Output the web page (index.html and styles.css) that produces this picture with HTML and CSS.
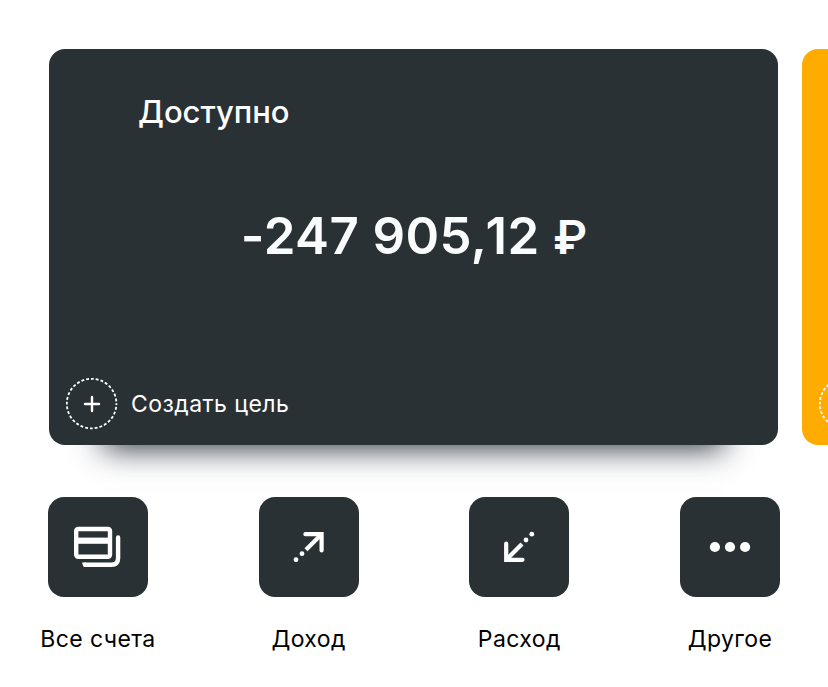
FILE: index.html
```
<!DOCTYPE html>
<html lang="ru">
<head>
    <meta charset="UTF-8">
    <meta name="viewport" content="width=device-width, initial-scale=1.0">
    <title>Счета</title>
    <link rel="stylesheet" href="styles.css">
</head>
<body>
    <div class="cards">
        <section class="card">
            <h1 class="card-title">Доступно</h1>
            <p class="amount">-247 905,<span class="cents">12</span> <span class="currency">₽</span></p>
            <button class="goal" type="button">
                <svg width="52" height="52" viewBox="0 0 52 52" fill="none" stroke="#fff">
                    <circle cx="25.6" cy="25.6" r="24.8" stroke-width="1.8" stroke-dasharray="2.9 1.97" stroke-dashoffset="1.45"/>
                    <path d="M19 26h14M26 19v14" stroke-width="2.4" stroke-linecap="round"/>
                </svg>
                <span>Создать цель</span>
            </button>
        </section>
        <section class="card card-next">
            <svg width="52" height="52" viewBox="0 0 52 52" fill="none" stroke="#fff">
                <circle cx="25.6" cy="25.6" r="24.8" stroke-width="1.8" stroke-dasharray="2.9 1.97" stroke-dashoffset="1.45"/>
            </svg>
        </section>
    </div>

    <nav class="actions">
        <button class="action" type="button">
            <span class="tile">
                <svg width="100" height="100" viewBox="0 0 100 100" fill="none" stroke="#fff" stroke-width="4.4" stroke-linecap="round">
                    <rect x="28.2" y="32" width="33.8" height="27.8" rx="2"/>
                    <path d="M29 43.7h32" stroke-width="6.2" stroke-linecap="butt"/>
                    <path d="M70.1 40.5V61q0 6.8-6.8 6.8H37"/>
                    <path d="M34 65.6h4v4.4q-3 0-4-4.4z" fill="#fff" stroke="none"/>
                </svg>
            </span>
            <span>Все счета</span>
        </button>
        <button class="action" type="button">
            <span class="tile">
                <svg width="100" height="100" viewBox="0 0 100 100" fill="none" stroke="#fff" stroke-width="4.2" stroke-linecap="round">
                    <path d="M46.4 37.2h16.2v16.2"/>
                    <path d="M62 37.8L47 52.8" stroke-linecap="butt"/>
                    <circle cx="43" cy="56.7" r="2.4" fill="#fff" stroke="none"/>
                    <circle cx="37" cy="62.7" r="2.4" fill="#fff" stroke="none"/>
                </svg>
            </span>
            <span>Доход</span>
        </button>
        <button class="action" type="button">
            <span class="tile">
                <svg width="100" height="100" viewBox="0 0 100 100" fill="none" stroke="#fff" stroke-width="4.2" stroke-linecap="round">
                    <path d="M37.2 46.5v16.3h16.3"/>
                    <path d="M38 62l15-15" stroke-linecap="butt"/>
                    <circle cx="57" cy="43" r="2.4" fill="#fff" stroke="none"/>
                    <circle cx="62.8" cy="37.2" r="2.4" fill="#fff" stroke="none"/>
                </svg>
            </span>
            <span>Расход</span>
        </button>
        <button class="action" type="button">
            <span class="tile">
                <svg width="100" height="100" viewBox="0 0 100 100" fill="#fff">
                    <circle cx="34.9" cy="50" r="5.1"/>
                    <circle cx="50" cy="50" r="5.1"/>
                    <circle cx="65.1" cy="50" r="5.1"/>
                </svg>
            </span>
            <span>Другое</span>
        </button>
    </nav>
</body>
</html>
```
FILE: styles.css
```
* {
    box-sizing: border-box;
}

body {
    margin: 0;
    height: 687px;
    overflow: hidden;
    background: #fff;
    font-family: Inter, sans-serif;
}

button {
    padding: 0;
    border: none;
    background: none;
    font-family: inherit;
    cursor: pointer;
}

svg {
    display: block;
}

/* Cards */
.cards {
    display: flex;
    gap: 24px;
    padding: 49px 0 52px 49px;
    overflow: hidden;
}

.card {
    display: flex;
    flex-direction: column;
    flex: none;
    width: 729px;
    height: 396px;
    padding: 43px 17px 15px;
    border-radius: 16px;
    background: #293134;
    color: #fff;
    box-shadow: 0 57px 30px -54px #293040;
}

.card-next {
    justify-content: flex-end;
    background: #ffab00;
    box-shadow: none;
}

.card-title {
    margin: 0 0 0 72px;
    font-size: 31px;
    line-height: 40px;
    font-weight: 500;
}

.amount {
    margin: 74px 0 0;
    padding-left: 1px;
    text-align: center;
    font-size: 51px;
    line-height: 60px;
    font-weight: 600;
    letter-spacing: 0.4px;
    color: #fafbfc;
}

.cents {
    margin-left: -2px;
    letter-spacing: 0.5px;
}

.currency {
    font-size: 47px;
    letter-spacing: 0;
}

.goal {
    display: flex;
    align-items: center;
    gap: 13px;
    margin-top: auto;
    color: #fff;
    font-size: 23px;
    letter-spacing: 0.45px;
}

/* Quick actions */
.actions {
    display: flex;
    justify-content: space-between;
}

.action {
    display: flex;
    flex-direction: column;
    align-items: center;
    gap: 27px;
    width: 196px;
    color: #000;
    font-size: 23px;
    line-height: 30px;
    letter-spacing: 0.4px;
}

.tile {
    border-radius: 16px;
    background: #293134;
}
```
